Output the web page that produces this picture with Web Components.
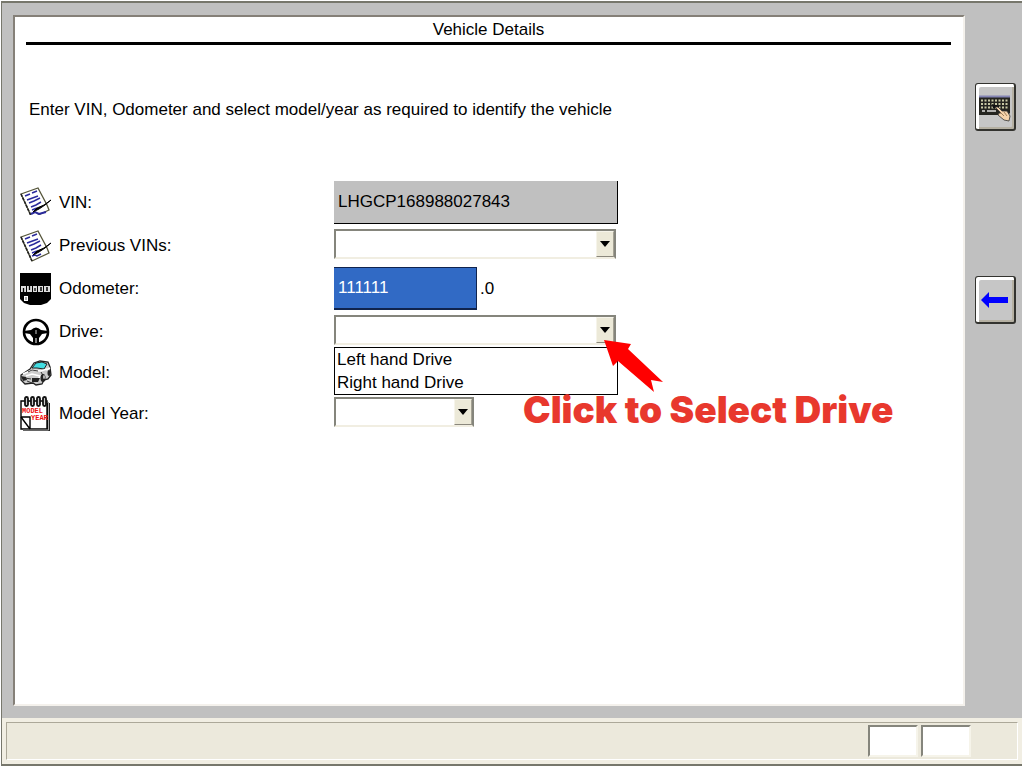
<!DOCTYPE html>
<html lang="en">
<head>
<meta charset="utf-8">
<title>Vehicle Details</title>
<style>
  html, body { height: 100%; margin: 0; }
  body {
    background: #fff;
    color: #000;
    font: 17px/24px "Liberation Sans", Arial, sans-serif;
  }
</style>
</head>
<body>

<diag-window>
  <detail-panel heading="Vehicle Details">
    <p slot="intro">Enter VIN, Odometer and select model/year as required to identify the vehicle</p>
    <vehicle-field icon="note" label="VIN:" type="text" value="LHGCP168988027843" variant="locked"></vehicle-field>
    <vehicle-field icon="notes" label="Previous VINs:" type="select"></vehicle-field>
    <vehicle-field icon="odometer" label="Odometer:" type="text" value="111111" variant="selected" suffix=".0"></vehicle-field>
    <vehicle-field icon="wheel" label="Drive:" type="select" options="Left hand Drive|Right hand Drive" open>
      <hint-arrow slot="hint">Click to Select Drive</hint-arrow>
    </vehicle-field>
    <vehicle-field icon="car" label="Model:" type="none"></vehicle-field>
    <vehicle-field icon="calendar" label="Model Year:" type="select" variant="short"></vehicle-field>
  </detail-panel>
  <tool-button slot="tools" icon="keyboard" label="Keyboard"></tool-button>
  <tool-button slot="tools" icon="back" label="Back"></tool-button>
  <status-bar slot="status"></status-bar>
</diag-window>

<script>
const SHEET = `
  <path d="M1 7 18 1 27 18 29 23 12 31Z" fill="#fff" stroke="#55553a" stroke-width="1.3"/>
  <path d="M1 7l11 24" stroke="#222" stroke-width="1.6" stroke-dasharray="3 1"/>
  <path d="M5 9l5-2M12 6l5-2M7 13l11-4M9 16l5-2 6-3M11 20l5-2 5-3M12 23l5-2" fill="none" stroke="#2a2a9c" stroke-width="1.5"/>`;
const PEN = `<path d="M31 13l-6 5-6 4-6 3 4-4 7-3z" fill="#000" stroke="#000"/>`;

const ICONS = {
  note: `<svg width="32" height="32" viewBox="0 0 32 32">${SHEET}<path d="M9 28h22v4H9z" fill="#fff"/><path d="M11 27l4-2 4 2 7-2" stroke="#2a2a9c" stroke-width="2" fill="none"/>${PEN}</svg>`,
  notes: `<svg width="32" height="34" viewBox="0 0 32 32">${SHEET}<path d="M12 26l3-1 2 1 4-2" stroke="#2a2a9c" stroke-width="1.5" fill="none"/>${PEN}</svg>`,
  odometer: `
    <svg width="32" height="34" viewBox="0 0 32 34">
      <path d="M0 1h31v26l-4 4-6 2H10l-6-2-4-4Z" fill="#000"/>
      <g fill="#ddd">
        <rect x="1" y="14" width="5" height="6"/><rect x="7" y="14" width="5" height="6"/>
        <rect x="13" y="14" width="4" height="6"/><rect x="18" y="14" width="5" height="6"/>
        <rect x="24" y="14" width="6" height="6"/>
      </g>
      <path d="M3.500 16v4M9.500 14v4M15 16v3M20 16h2M20 18h2M26 16h2M26 18h2" stroke="#000" stroke-width="1.3"/>
      <path d="M4 24h4v5H4z" fill="#fff"/><path d="M5 25h2v3H5z" fill="#aaa"/>
    </svg>`,
  wheel: `
    <svg width="32" height="30" viewBox="0 0 32 30">
      <circle cx="16" cy="15" r="12" fill="#fff" stroke="#000" stroke-width="2.6"/>
      <path d="M4 14l7-1q5-5 10 0l7 1v2l-6 1-3 4v6h-6v-6l-3-4-6-1z" fill="#000"/>
      <path d="M16 13v4" stroke="#ccc"/><path d="M16 21v5" stroke="#fff"/>
    </svg>`,
  car: `
    <svg width="32" height="28" viewBox="0 0 32 28">
      <path d="M1 16l9-6 4-6 6-2 8 1 2 5 1 8-3 4-4 1-2 4-6 1-3-2-8 1-4-4z" fill="#ccc" stroke="#222" stroke-width="1.3"/>
      <path d="M12 9l4-5 6-1 5 2-3 5-7-1z" fill="#42dde2" stroke="#222"/>
      <path d="M3 15l9-4 9 1 6-2M6 17l6-2 8 2-2 4M26 11l4-2" fill="none" stroke="#fff" stroke-width="1.6"/>
      <path d="M1 17l5 1 1 3-4 1zM12 19l8 0-2 4-6 0z" fill="#222"/>
      <path d="M7 22l5 2M8 13l4-2 6 1M21 13l3 5M5 19l6 1" stroke="#333" fill="none"/>
      <ellipse cx="23" cy="19" rx="2.5" ry="4" fill="#222"/><ellipse cx="24" cy="18" rx="1" ry="2" fill="#bbb"/>
      <ellipse cx="29" cy="14" rx="1.5" ry="3" fill="#222"/>
    </svg>`,
  calendar: `
    <svg width="32" height="36" viewBox="0 0 32 36">
      <path d="M3 7h27v28H3z" fill="#222"/>
      <path d="M1 5h26v28H1z" fill="#fff" stroke="#000" stroke-width="1.4"/>
      <path d="M28.500 6v28H3" fill="none" stroke="#aaa"/>
      <g fill="#ccc" stroke="#111" stroke-width="1.8">
        <rect x="5" y="1" width="3" height="9" rx="1.5"/><rect x="11" y="1" width="3" height="9" rx="1.5"/>
        <rect x="17" y="1" width="3" height="9" rx="1.5"/><rect x="23" y="1" width="3" height="9" rx="1.5"/>
      </g>
      <g fill="#e11" font-family="Liberation Mono, monospace" font-size="7" font-weight="700">
        <text x="2" y="17">MODEL</text><text x="11" y="24">YEAR</text>
      </g>
      <path d="M1 21h9v12M1 21l9 12" fill="none" stroke="#000" stroke-width="1.4"/>
    </svg>`,
  keyboard: `
    <svg width="34" height="30" viewBox="0 0 34 30">
      <path d="M1 5h31v16l-2 2H1z" fill="#24241f"/>
      <path d="M1 4.500h31" stroke="#8585b5" stroke-width="2"/>
      <path d="M3 8.500h28M3 12h28M3 15.500h28" stroke="#c9c9a5" stroke-width="2" stroke-dasharray="2 1.5"/>
      <path d="M4 19h3M9 19h9" stroke="#ddd" stroke-width="1.500"/>
      <path d="M14 12l7 2v2h-6z" fill="#111"/>
      <path d="M17 15l3 0 4 4 5 0 3 5-1 5-5-1-6-5 1-2 2 0z" fill="#f6d3aa" stroke="#333" stroke-width=".8"/>
      <path d="M22 20l4 4M26 20l3 4" stroke="#8b6a45" stroke-width=".8"/>
    </svg>`,
  back: `
    <svg width="28" height="18" viewBox="0 0 28 18">
      <path d="M0 9l8-8v5h19v6H8v5z" fill="#00f"/>
    </svg>`
};

class DiagWindow extends HTMLElement {
  constructor() {
    super();
    this.attachShadow({ mode: 'open' }).innerHTML = `
      <style>
        :host {
          display: grid;
          grid-template: minmax(0, 1fr) auto / minmax(0, 1fr) auto;
          box-sizing: border-box;
          min-height: calc(100vh - 3px);
          margin: 1px 2px 2px 1px;
          border: 1px solid #77776c;
          border-width: 2px 0 2px 1px;
          background: #c0c0c0;
        }
        main { display: grid; padding: 12px 10px 12px 11px; }
        nav { display: flex; flex-direction: column; gap: 145px; padding: 80px 6px 0 0; }
        footer { grid-column: 1 / -1; }
      </style>
      <main><slot></slot></main>
      <nav><slot name="tools"></slot></nav>
      <footer><slot name="status"></slot></footer>`;
  }
}

class DetailPanel extends HTMLElement {
  constructor() {
    super();
    this.attachShadow({ mode: 'open' });
  }

  connectedCallback() {
    this.shadowRoot.innerHTML = `
      <style>
        :host {
          display: block;
          box-sizing: border-box;
          border: 2px solid;
          border-color: #858078 #f4f1ec #f4f1ec #858078;
          background: #fff;
        }
        h1 {
          margin: 0 12px 0 11px;
          padding: 1px 0 0;
          border-bottom: 3px solid #000;
          font: inherit;
          text-align: center;
        }
        .intro { padding: 53px 14px 0; }
        ::slotted(p) { margin: 0; }
        form { display: grid; gap: 2px; padding: 59px 5px 20px; }
      </style>
      <h1>${this.getAttribute('heading')}</h1>
      <div class="intro"><slot name="intro"></slot></div>
      <form><slot></slot></form>`;
  }
}

class VehicleField extends HTMLElement {
  constructor() {
    super();
    this.attachShadow({ mode: 'open' });
  }

  connectedCallback() {
    this._render();
  }

  _control() {
    const value = this.getAttribute('value') || '';
    switch (this.getAttribute('type')) {
      case 'text':
        return `<input id="control" type="text" value="${value}" ${this.getAttribute('variant') === 'locked' ? 'readonly' : ''}>`;
      case 'select':
        return `
          <div class="combo">
            <select id="control"><option></option></select>
            <span class="drop" aria-hidden="true"></span>
            ${this._list()}
            <slot name="hint"></slot>
          </div>`;
      default:
        return '';
    }
  }

  _list() {
    if (!this.hasAttribute('open')) return '';
    const items = this.getAttribute('options').split('|');
    return `<ul role="listbox">${items.map((text) => `<li role="option">${text}</li>`).join('')}</ul>`;
  }

  _render() {
    const control = this._control();
    const suffix = this.getAttribute('suffix');
    this.shadowRoot.innerHTML = `
      <style>
        :host {
          display: grid;
          grid-template-columns: 32px 275px minmax(0, 1fr);
          column-gap: 7px;
          align-items: center;
          min-height: 39px;
        }
        .icon { display: grid; place-items: center; }
        .icon svg { display: block; }
        .value { display: flex; align-items: center; gap: 3px; margin-left: -7px; }
        input {
          box-sizing: border-box;
          width: 284px;
          height: 43px;
          margin: 0;
          padding: 0 4px;
          border: solid #000;
          border-width: 0 1px 1px 0;
          border-radius: 0;
          outline: 0;
          background: #c0c0c0;
          color: inherit;
          font: inherit;
        }
        :host([variant="selected"]) input {
          width: 143px;
          border-width: 1px 1px 2px 0;
          border-color: #10244e;
          background: #316ac5;
          color: #fff;
        }
        .combo {
          position: relative;
          display: grid;
          grid-template-columns: minmax(0, 1fr) 18px;
          box-sizing: border-box;
          width: 282px;
          height: 30px;
          margin-bottom: 3px;
          border: 2px solid;
          border-color: #85857c #85857c #f1eee2 #85857c;
          background: #fff;
        }
        :host([variant="short"]) .combo { width: 140px; }
        select {
          grid-area: 1 / 1 / 2 / 3;
          appearance: none;
          margin: 0;
          padding: 0 4px;
          border: 0;
          border-radius: 0;
          background: none;
          font: inherit;
        }
        .drop {
          grid-area: 1 / 2;
          display: grid;
          place-items: center;
          border: 1px solid;
          border-color: #f6f4ea #a5a294 #8a877c #f6f4ea;
          background: #ece9d8;
          pointer-events: none;
        }
        .drop::after {
          content: "";
          border: 5px solid transparent;
          border-top: 6px solid #000;
          border-bottom: 0;
        }
        ul {
          position: absolute;
          top: 30px;
          left: -2px;
          right: -4px;
          z-index: 1;
          margin: 0;
          padding: 0 2px;
          border: 1px solid #000;
          background: #fff;
          list-style: none;
          line-height: 23px;
        }
      </style>
      <span class="icon">${ICONS[this.getAttribute('icon')]}</span>
      ${control ? `<label for="control">${this.getAttribute('label')}</label>` : `<span>${this.getAttribute('label')}</span>`}
      <div class="value">${control}${suffix ? `<span>${suffix}</span>` : ''}</div>`;
  }
}

// red callout hanging off the drop-down button
class HintArrow extends HTMLElement {
  constructor() {
    super();
    this.attachShadow({ mode: 'open' }).innerHTML = `
      <style>
        :host {
          position: absolute;
          top: 22px;
          left: 187px;
          z-index: 2;
          color: #e8382d;
          font: 900 37px/38px Inter, "Liberation Sans", sans-serif;
          white-space: nowrap;
          pointer-events: none;
        }
        svg { display: block; margin: 0 0 -2px 80px; }
      </style>
      <svg width="62" height="54" viewBox="0 0 62 54">
        <path d="M1 1l27 4-3 5 35 33-12-2 3 12-36-31-5 5z" fill="#f00"/>
      </svg>
      <slot></slot>`;
  }
}

class ToolButton extends HTMLElement {
  constructor() {
    super();
    this.attachShadow({ mode: 'open' });
  }

  connectedCallback() {
    this.shadowRoot.innerHTML = `
      <style>
        :host { display: block; }
        button {
          display: grid;
          place-items: center;
          box-sizing: border-box;
          width: 41px;
          height: 48px;
          padding: 0;
          border: 2px solid #33332f;
          border-width: 1px 2px 2px 1px;
          border-radius: 3px;
          background: #c6c6c6;
          box-shadow: inset 3px 3px #fff, inset -2px -2px #b5b0a2;
        }
        svg { display: block; }
      </style>
      <button type="button" aria-label="${this.getAttribute('label')}">${ICONS[this.getAttribute('icon')]}</button>`;
  }
}

class StatusBar extends HTMLElement {
  constructor() {
    super();
    this.attachShadow({ mode: 'open' }).innerHTML = `
      <style>
        :host { display: block; padding: 4px 4px 4px 4px; background: #f1eee3; }
        .bar {
          display: flex;
          justify-content: flex-end;
          gap: 3px;
          padding: 2px 46px 2px 0;
          border: 1px solid;
          border-color: #aca899 #fff #fff #aca899;
          background: #ece9dc;
        }
        .cell {
          box-sizing: border-box;
          width: 50px;
          height: 32px;
          border: 2px solid;
          border-color: #85857c #f6f4ea #f6f4ea #85857c;
          background: #fff;
        }
      </style>
      <div class="bar"><div class="cell"></div><div class="cell"></div></div>`;
  }
}

customElements.define('diag-window', DiagWindow);
customElements.define('detail-panel', DetailPanel);
customElements.define('vehicle-field', VehicleField);
customElements.define('hint-arrow', HintArrow);
customElements.define('tool-button', ToolButton);
customElements.define('status-bar', StatusBar);
</script>
</body>
</html>
